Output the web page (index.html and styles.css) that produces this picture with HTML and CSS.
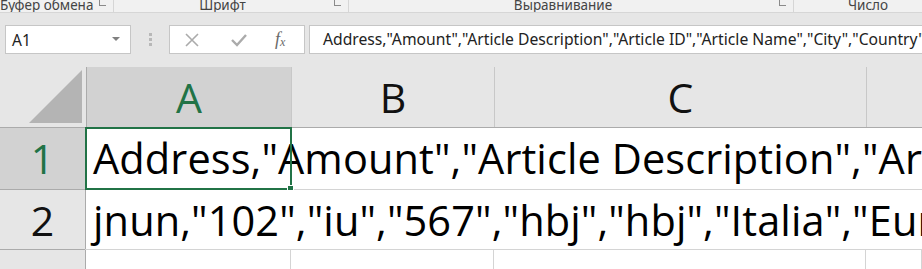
FILE: index.html
```html
<html>
<head>
  <link rel="stylesheet" href="styles.css">
</head>
<body>
  <div class="ribbon">
    <div class="group g-clip"><span class="label">Буфер обмена</span><span class="launch"></span></div>
    <div class="group g-font"><span class="label">Шрифт</span><span class="launch"></span></div>
    <div class="group g-align"><span class="label">Выравнивание</span><span class="launch"></span></div>
    <div class="group g-num"><span class="label">Число</span></div>
  </div>

  <div class="formula-bar">
    <div class="name-box">
      <span>A1</span>
      <svg width="8" height="5" viewBox="0 0 8 5"><path d="M0 0 L8 0 L4 4 Z" fill="#808080"/></svg>
    </div>
    <div class="grip"><i></i><i></i><i></i></div>
    <div class="fx-buttons">
      <svg width="16" height="16" viewBox="0 0 16 16"><path d="M2 2 L14 14 M14 2 L2 14" stroke="#ababab" stroke-width="1.6" fill="none"/></svg>
      <svg width="18" height="16" viewBox="0 0 18 16"><path d="M2 8 L7 13 L16 3" stroke="#ababab" stroke-width="2.4" fill="none"/></svg>
      <span class="fx">f<sub>x</sub></span>
    </div>
    <div class="formula-input">Address,"Amount","Article Description","Article ID","Article Name","City","Country","Customer"</div>
  </div>

  <div class="sheet">
    <div class="row head-row">
      <div class="corner"><svg width="54" height="54" viewBox="0 0 54 54"><path d="M0 53 L53 0 L53 53 Z" fill="#b4b4b4"/></svg></div>
      <div class="col-head col-a active">A</div>
      <div class="col-head col-b">B</div>
      <div class="col-head col-c">C</div>
      <div class="col-head col-d"></div>
    </div>
    <div class="row row-1">
      <div class="row-head active">1</div>
      <div class="text-cell">Address,"Amount","Article Description","Article ID","Article Name"</div>
      <div class="selection"><span class="handle"></span></div>
    </div>
    <div class="row row-2">
      <div class="row-head">2</div>
      <div class="text-cell">jnun,"102","iu","567","hbj","hbj","Italia","Europe"</div>
    </div>
    <div class="row row-3">
      <div class="row-head">3</div>
      <div class="cell col-a"></div>
      <div class="cell col-b"></div>
      <div class="cell col-c"></div>
      <div class="cell col-d"></div>
    </div>
  </div>
</body>
</html>
```

FILE: styles.css
```css
body {
  margin: 0;
  padding: 0;
  width: 922px;
  height: 269px;
  overflow: hidden;
  background-color: #e6e6e6;
  font-family: "Noto Sans", sans-serif;
}

/* ribbon group captions, cut off at the top */
.ribbon {
  display: flex;
  height: 12px;
  background-color: #f1f1f1;
  border-bottom: 1px solid #d6d6d6;
  overflow: hidden;
}

.group {
  display: flex;
  align-items: flex-end;
  height: 12px;
  border-right: 1px solid #d6d6d6;
  box-sizing: border-box;
  position: relative;
  flex-shrink: 0;
}

.label {
  font-size: 13.5px;
  line-height: 14px;
  color: #444;
  margin-bottom: 0;
  white-space: nowrap;
}

.launch {
  position: absolute;
  right: 7px;
  top: 0;
  width: 6px;
  height: 5px;
  border-left: 1px solid #8a8a8a;
  border-bottom: 1px solid #8a8a8a;
}

.g-clip {
  width: 114px;
}

.g-font {
  width: 235px;
  justify-content: center;
  padding-right: 17px;
}

.g-align {
  width: 445px;
  justify-content: center;
  padding-right: 16px;
}

.g-num {
  flex-grow: 1;
  flex-shrink: 1;
  border-right: none;
  padding-left: 54px;
}

/* formula bar */
.formula-bar {
  display: flex;
  align-items: flex-start;
  height: 54px;
  padding: 12px 0 0 5px;
  box-sizing: border-box;
}

.name-box {
  width: 126px;
  height: 29px;
  flex-shrink: 0;
  box-sizing: border-box;
  background: #fff;
  border: 1px solid #c6c6c6;
  display: flex;
  align-items: center;
  justify-content: space-between;
  padding: 0 10px 0 6px;
  font-size: 15.5px;
  color: #222;
}

.grip {
  width: 38px;
  flex-shrink: 0;
  display: flex;
  flex-direction: column;
  align-items: center;
  gap: 2px;
  padding-top: 8px;
}

.grip i {
  display: block;
  width: 3px;
  height: 3px;
  background: #b8b8b8;
}

.fx-buttons {
  width: 136px;
  height: 29px;
  flex-shrink: 0;
  box-sizing: border-box;
  background: #fff;
  border: 1px solid #c6c6c6;
  display: flex;
  align-items: center;
  padding-left: 14px;
  gap: 30px;
}

.fx {
  font-family: "Liberation Serif", serif;
  font-style: italic;
  font-size: 18px;
  color: #6a6a6a;
  margin-left: -3px;
}

.fx sub {
  font-size: 12px;
  vertical-align: -1px;
}

.formula-input {
  flex-grow: 1;
  min-width: 0;
  height: 29px;
  margin-left: 4px;
  box-sizing: border-box;
  background: #fff;
  border: 1px solid #c6c6c6;
  border-right: none;
  padding-left: 13px;
  font-size: 15.7px;
  line-height: 27px;
  color: #222;
  white-space: nowrap;
  overflow: hidden;
}

/* sheet grid */
.sheet {
  font-family: "Open Sans", sans-serif;
}

.row {
  display: flex;
  position: relative;
  border-bottom: 1px solid #d4d4d4;
}

.head-row {
  height: 60px;
  border-bottom: 1px solid #ababab;
}

.corner {
  width: 86px;
  display: flex;
  align-items: flex-end;
  justify-content: flex-end;
  padding: 0 3px 3px 0;
  box-sizing: border-box;
}

.col-head {
  border-left: 1px solid #ababab;
  box-sizing: border-box;
  text-align: center;
  font-size: 41px;
  line-height: 60px;
  color: #111;
}

.col-head.active {
  background: #d2d2d2;
  color: #217346;
}

.col-a { width: 205px; }
.col-b { width: 203px; }
.col-c { width: 372px; }
.col-d { flex-grow: 1; }

.col-head.col-b,
.col-head.col-c,
.col-head.col-d {
  border-left-color: #c8c8c8;
}

.row-1 { height: 61px; }
.row-2 { height: 59px; }
.row-3 { height: 40px; border-bottom: none; }

.row-head {
  width: 86px;
  flex-shrink: 0;
  box-sizing: border-box;
  border-right: 1px solid #ababab;
  text-align: center;
  font-size: 41px;
  line-height: 60px;
  color: #111;
  position: relative;
}

.row-head.active {
  background: #d2d2d2;
  color: #217346;
}

.row-head::after {
  content: "";
  position: absolute;
  left: 0;
  right: 0;
  bottom: -1px;
  border-bottom: 1px solid #ababab;
}

.row-3 .row-head {
  line-height: 64px;
}

.text-cell {
  flex-grow: 1;
  min-width: 0;
  background: #fff;
  padding-left: 7px;
  font-size: 41.5px;
  letter-spacing: 0.1px;
  line-height: 60px;
  color: #000;
  white-space: nowrap;
  overflow: hidden;
}

.cell {
  background: #fff;
  border-right: 1px solid #d4d4d4;
  box-sizing: border-box;
}

.row-3 .col-a { width: 205px; }

.selection {
  position: absolute;
  left: 85px;
  top: -1px;
  width: 207px;
  height: 63px;
  box-sizing: border-box;
  border: 2px solid #217346;
}

.handle {
  position: absolute;
  right: -4px;
  bottom: -4px;
  width: 5px;
  height: 5px;
  background: #217346;
  border: 1px solid #fff;
}
```
